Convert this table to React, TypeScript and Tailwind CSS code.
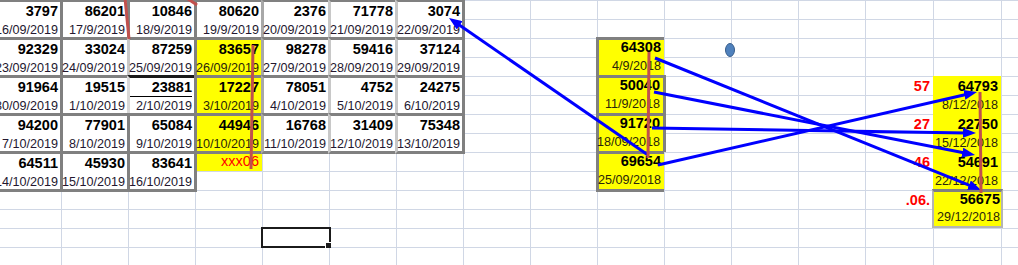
import React from 'react'

type Cell = { num: string; date: string }

// left table: 5 blocks of 7 (last block only 3 dated cells)
const TABLE: Cell[][] = [
  [
    { num: '3797', date: '16/09/2019' },
    { num: '86201', date: '17/9/2019' },
    { num: '10846', date: '18/9/2019' },
    { num: '80620', date: '19/9/2019' },
    { num: '2376', date: '20/09/2019' },
    { num: '71778', date: '21/09/2019' },
    { num: '3074', date: '22/09/2019' },
  ],
  [
    { num: '92329', date: '23/09/2019' },
    { num: '33024', date: '24/09/2019' },
    { num: '87259', date: '25/09/2019' },
    { num: '83657', date: '26/09/2019' },
    { num: '98278', date: '27/09/2019' },
    { num: '59416', date: '28/09/2019' },
    { num: '37124', date: '29/09/2019' },
  ],
  [
    { num: '91964', date: '30/09/2019' },
    { num: '19515', date: '1/10/2019' },
    { num: '23881', date: '2/10/2019' },
    { num: '17227', date: '3/10/2019' },
    { num: '78051', date: '4/10/2019' },
    { num: '4752', date: '5/10/2019' },
    { num: '24275', date: '6/10/2019' },
  ],
  [
    { num: '94200', date: '7/10/2019' },
    { num: '77901', date: '8/10/2019' },
    { num: '65084', date: '9/10/2019' },
    { num: '44946', date: '10/10/2019' },
    { num: '16768', date: '11/10/2019' },
    { num: '31409', date: '12/10/2019' },
    { num: '75348', date: '13/10/2019' },
  ],
  [
    { num: '64511', date: '14/10/2019' },
    { num: '45930', date: '15/10/2019' },
    { num: '83641', date: '16/10/2019' },
  ],
]

const COL = ['col-start-1', 'col-start-2', 'col-start-3', 'col-start-4', 'col-start-5', 'col-start-6', 'col-start-7']
const ROW = ['row-start-1', 'row-start-3', 'row-start-5', 'row-start-7', 'row-start-9']
const EDGE_L = [
  'border-l-[#808080]',
  'border-l-[#808080]',
  'border-l-[#808080]',
  'border-l-[#808080]',
  'border-l-[#a8a8a8]',
  'border-l-[#c8c8c8]',
  'border-l-[#c8c8c8]',
]
const EDGE_R = [
  'border-r-[#808080]',
  'border-r-[#808080]',
  'border-r-[#808080]',
  'border-r-[#a8a8a8]',
  'border-r-[#c8c8c8]',
  'border-r-[#c8c8c8]',
  'border-r-[#808080]',
]

const MIDDLE: Cell[] = [
  { num: '64308', date: '4/9/2018' },
  { num: '50040', date: '11/9/2018' },
  { num: '91720', date: '18/09/2018' },
  { num: '69654', date: '25/09/2018' },
]
const MID_POS = [
  'row-start-3 -mr-0',
  'row-start-5 -mr-[2px] border-r-[3px]',
  'row-start-7 -mr-[2px] border-r-[3px]',
  'row-start-9 -mb-[2px] border-b-[3px]',
]

const RIGHT: Cell[] = [
  { num: '64793', date: '8/12/2018' },
  { num: '22750', date: '15/12/2018' },
  { num: '54691', date: '22/12/2018' },
]
const RIGHT_ROW = ['row-start-5', 'row-start-7', 'row-start-9']
const LABELS = [
  { t: '57', cls: 'row-start-5' },
  { t: '27', cls: 'row-start-7' },
  { t: '46', cls: 'row-start-9' },
  { t: '.06.', cls: 'row-start-11' },
]

const GRID =
  'grid grid-cols-[67px_67px_67px_67px_67px_67px_67px_67px_67px_67px_67px_67px_67px_68px_68px_67px] grid-rows-[repeat(14,19px)]'

function Num({ children }: { children: React.ReactNode }) {
  return <div className="text-[14.5px] leading-[19px] font-bold text-black">{children}</div>
}

function Dt({ children, yellow }: { children: React.ReactNode; yellow?: boolean }) {
  return (
    <div className={`text-[12.6px] leading-[19px] ${yellow ? 'text-[#2a260a]' : 'text-[#24172f]'}`}>{children}</div>
  )
}

function Arrows() {
  return (
    <svg className="pointer-events-none absolute inset-0" width="1018" height="265" viewBox="0 0 1018 265">
      <defs>
        <marker
          id="head"
          viewBox="0 0 13 10"
          refX="4"
          refY="5"
          markerWidth="13"
          markerHeight="10"
          markerUnits="userSpaceOnUse"
          orient="auto"
        >
          <path d="M0,0 L13,5 L0,10 Z" fill="#0000ff" />
        </marker>
      </defs>
      <g stroke="#0000ff" strokeWidth="3" fill="none" markerEnd="url(#head)">
        <line x1="648" y1="155" x2="456.4" y2="23.1" />
        <line x1="655" y1="58" x2="972.7" y2="186.6" />
        <line x1="654" y1="92" x2="966.2" y2="153.3" />
        <line x1="652" y1="128" x2="967" y2="132.9" />
        <line x1="658" y1="165" x2="968.2" y2="94" />
      </g>
      <g stroke="#c0504d" strokeWidth="3" strokeLinecap="butt">
        <line x1="125" y1="-2" x2="129" y2="39" />
        <line x1="188" y1="-1" x2="197" y2="5" />
        <line x1="253" y1="45" x2="251" y2="169" />
        <line x1="649" y1="52" x2="648" y2="158" />
        <line x1="980" y1="92" x2="981" y2="193" />
      </g>
      <ellipse cx="730" cy="50" rx="4.5" ry="6.5" fill="#4f81bd" stroke="#385d8a" strokeWidth="1" />
    </svg>
  )
}

export default function App() {
  return (
    <div className="relative h-[265px] w-[1018px] overflow-hidden bg-white font-['Liberation_Sans',Arial,sans-serif]">
      <div className="-ml-[6px] grid">
        {/* sheet gridlines */}
        <div className={`col-start-1 row-start-1 ${GRID}`}>
          {Array.from({ length: 16 * 14 }).map((_, i) => (
            <div key={i} className="border-l border-t border-[#d0d7e5]" />
          ))}
        </div>

        {/* cell contents */}
        <div className={`col-start-1 row-start-1 ${GRID}`}>
          <div className="col-start-4 row-start-9 bg-[#ffff00] pr-[3px] text-right text-[14.5px] leading-[19px] text-[#ff0000]">
            xxx06
          </div>

          {TABLE.map((block, b) =>
            block.map((c, i) => {
              const yellow = i === 3 && b >= 1 && b <= 3
              const special = b === 2 && i === 2
              let edgeL = EDGE_L[i]
              if (b === 1 && i === 2) edgeL = 'border-l-[#c8c8c8]'
              if (special) edgeL = 'border-l-[#d8d8d8]'
              return (
                <div
                  key={`${b}-${i}`}
                  className={`${COL[i]} ${ROW[b]} row-span-2 -mt-px -mr-[2px] -mb-[2px] -ml-px flex flex-col items-end border-[3px] border-[#808080] pr-[2px] ${edgeL} ${EDGE_R[i]} ${
                    yellow ? 'bg-[#ffff00]' : 'bg-white'
                  } ${special ? 'border-t-[#1a1a1a]' : ''}`}
                >
                  {special ? (
                    <div className="h-[19px] self-stretch border-b border-black text-right text-[14.5px] leading-[19px] font-bold text-black">
                      {c.num}
                    </div>
                  ) : (
                    <Num>{c.num}</Num>
                  )}
                  <Dt yellow={yellow}>{c.date}</Dt>
                </div>
              )
            }),
          )}

          {MIDDLE.map((c, i) => (
            <div
              key={c.num}
              className={`col-start-10 ${MID_POS[i]} row-span-2 -mt-px -ml-px flex flex-col items-end border-l-[3px] border-t-[3px] border-[#808080] bg-[#ffff00] pr-[3px]`}
            >
              <div className="-mt-[2px]">
                <Num>{c.num}</Num>
              </div>
              <Dt yellow>{c.date}</Dt>
            </div>
          ))}

          {LABELS.map((l) => (
            <div
              key={l.t}
              className={`col-start-14 ${l.cls} pt-px pr-[3px] text-right text-[14.5px] leading-[19px] font-bold text-[#ff0000]`}
            >
              {l.t}
            </div>
          ))}

          {RIGHT.map((c, i) => (
            <div
              key={c.num}
              className={`col-start-15 ${RIGHT_ROW[i]} row-span-2 flex flex-col items-end bg-[#ffff00] pt-px pr-[3px]`}
            >
              <Num>{c.num}</Num>
              <Dt yellow>{c.date}</Dt>
            </div>
          ))}
          <div className="col-start-15 row-start-11 row-span-2 -mt-px -mr-[2px] -ml-px flex flex-col items-end border-2 border-t-[3px] border-[#b4b4b4] border-t-[#808080] bg-[#ffff00] pr-[1px]">
            <div className="-mt-[2px]">
              <Num>56675</Num>
            </div>
            <div className="-mt-px">
              <Dt yellow>29/12/2018</Dt>
            </div>
          </div>

          {/* active cell */}
          <div className="relative col-start-5 row-start-13 -mt-px -mr-[2px] -mb-px -ml-px border-2 border-[#1b1b1b]">
            <div className="absolute -right-[2px] -bottom-[2px] h-[6px] w-[6px] border-t border-l border-white bg-[#1b1b1b]" />
          </div>
        </div>
      </div>

      <Arrows />
    </div>
  )
}
